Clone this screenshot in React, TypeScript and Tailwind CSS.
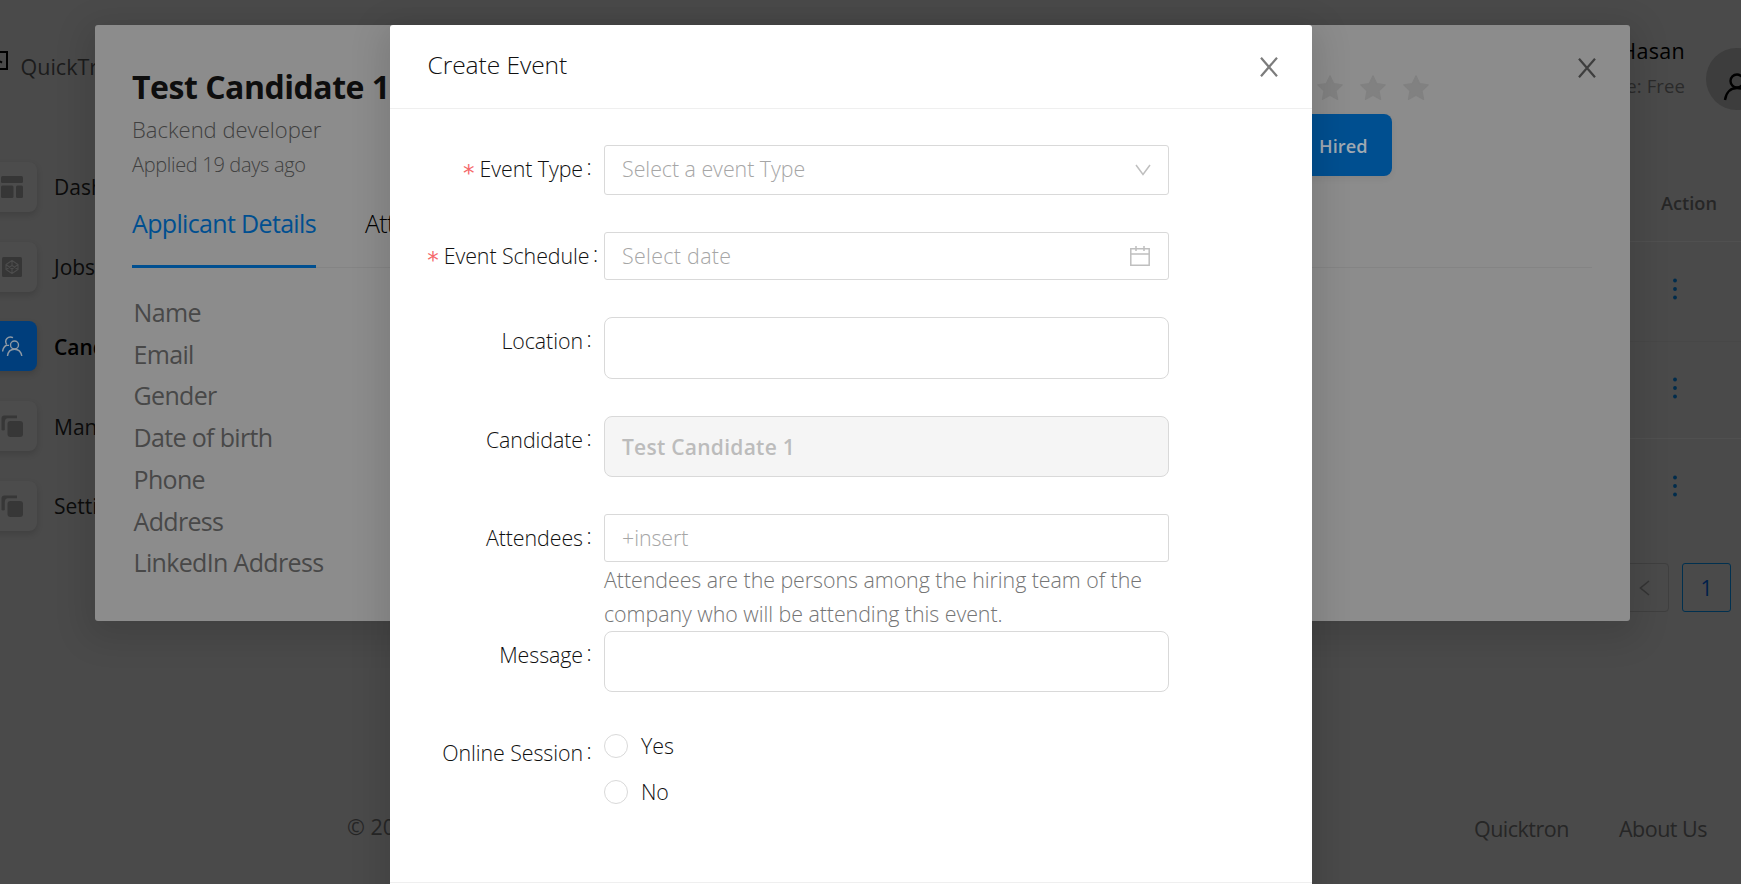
import type { ReactNode } from "react";

function CloseIcon() {
  return (
    <svg width="18" height="20" viewBox="0 0 18 20" fill="none" stroke="currentColor" strokeWidth="2.200">
      <path d="M1 0.800 17 19.200M17 0.800 1 19.200" />
    </svg>
  );
}

function ChevronDown() {
  return (
    <svg width="16" height="12" viewBox="0 0 16 12" fill="none" stroke="#bfbfbf" strokeWidth="1.500">
      <path d="M1 1 8 10.500 15 1" />
    </svg>
  );
}

function CalendarIcon() {
  return (
    <svg width="20" height="20" viewBox="0 0 20 20" fill="none" stroke="#bfbfbf" strokeWidth="1.500">
      <path d="M0.800 2.800H19.200V19.200H0.800ZM0.800 8H19.200M6 0V5M14 0V5" />
    </svg>
  );
}

function Star() {
  return (
    <svg width="28" height="28" viewBox="0 0 24 24" fill="#818181" stroke="#818181" strokeWidth="1" strokeLinejoin="round">
      <path d="M12 1.500 15.200 8.200 22.500 9.200 17.200 14.400 18.500 21.800 12 18.300 5.500 21.800 6.800 14.400 1.500 9.200 8.800 8.200Z" />
    </svg>
  );
}

function DashboardIcon() {
  return (
    <svg width="22" height="22" viewBox="0 0 22 22" fill="#363636">
      <rect width="22" height="7" rx="1.500" />
      <rect y="9.500" width="12.500" height="12.500" rx="1.500" />
      <rect x="15" y="9.500" width="7" height="12.500" rx="1.500" />
    </svg>
  );
}

function JobsIcon() {
  return (
    <svg width="20" height="20" viewBox="0 0 20 20" fill="none" stroke="#4c4c4c" strokeWidth="1.100">
      <rect width="20" height="20" rx="1.500" fill="#363636" stroke="none" />
      <path d="M10 3.500 16 7.500V12.500L10 16.500 4 12.500V7.500ZM4 7.500 10 12 16 7.500M4 12.500 10 8.500 16 12.500M10 3.500V8.500M10 12V16.500" />
    </svg>
  );
}

function CandidatesIcon() {
  return (
    <svg width="21" height="21" viewBox="0 0 21 21" fill="none" stroke="#8f9aa5" strokeWidth="1.400">
      <circle cx="12.500" cy="9" r="4" />
      <path d="M5.500 20C6 15.500 9 13.200 12.500 13.200S19 15.500 19.800 20M11 1.700C6 -0.500 2 4 4.600 8.300M4.800 9C2.500 10 1 12.500 0.600 15.500M4.600 9.400H7" />
    </svg>
  );
}

function CopyIcon() {
  return (
    <svg width="22" height="22" viewBox="0 0 22 22" fill="#373737">
      <rect x="6.500" y="6" width="15.500" height="16" rx="3" />
      <path d="M0.500 15V3.500A3 3 0 0 1 3.500 0.500H16V3.300H7A3.600 3.600 0 0 0 3.800 6.900V15A3.300 3.300 0 0 1 0.500 15Z" />
    </svg>
  );
}

function NavItem({ icon, label, active }: { icon: ReactNode; label: string; active?: boolean }) {
  return (
    <div className="flex h-[79.800px] items-center">
      <div
        className={
          active
            ? "-ml-[13px] flex h-[50px] w-[50px] shrink-0 items-center justify-center rounded-lg bg-[#003e7c] shadow-[0_3px_6px_rgba(0,0,0,0.14)]"
            : "-ml-[13px] flex h-[50px] w-[50px] shrink-0 items-center justify-center rounded-lg bg-[#4c4c4c] shadow-[0_3px_6px_rgba(0,0,0,0.14)]"
        }
      >
        {icon}
      </div>
      <span
        className={
          active
            ? "ml-[17px] pt-[2px] text-[21px] font-semibold text-black"
            : "ml-[17px] pt-[2px] text-[21px] text-[#0c0c0c]"
        }
      >
        {label}
      </span>
    </div>
  );
}

function MoreDots() {
  return (
    <svg width="4" height="22" viewBox="0 0 4 22" fill="#002c4c">
      <circle cx="2" cy="2.500" r="1.900" />
      <circle cx="2" cy="11" r="1.900" />
      <circle cx="2" cy="19.500" r="1.900" />
    </svg>
  );
}

function Page() {
  return (
    <div className="flex h-full flex-col bg-[#4a4a4a]">
      <div className="flex min-h-0 flex-1 justify-between">
        <aside className="w-[120px] shrink-0 overflow-hidden whitespace-nowrap">
          <div className="flex h-[147px] pt-[50px]">
            <svg className="mt-px shrink-0" width="8" height="19" viewBox="0 0 8 19" fill="none" stroke="#000" strokeWidth="2">
              <path d="M0 1H7V18H0M0 10.300 2 11.600" />
            </svg>
            <span className="ml-[12.500px] text-[21.500px] leading-[34px] text-[#1c1c1c]">QuickTron</span>
          </div>
          <NavItem icon={<DashboardIcon />} label="Dashboard" />
          <NavItem icon={<JobsIcon />} label="Jobs" />
          <NavItem icon={<CandidatesIcon />} label="Candidates" active />
          <NavItem icon={<CopyIcon />} label="Manage" />
          <NavItem icon={<CopyIcon />} label="Settings" />
        </aside>
        <section className="flex w-[111px] shrink-0 flex-col">
          <div className="flex h-[167px] gap-[21px] pt-[34px]">
            <div className="flex w-[55px] shrink-0 flex-col items-end whitespace-nowrap">
              <span className="text-[21.500px] leading-[34px] font-medium tracking-[0.300px] text-black">Hasan</span>
              <span className="mt-px text-[18.500px] leading-[34px] font-medium tracking-[0.100px] text-[#2a2a2a]">Profile: Free</span>
            </div>
            <div className="mt-[14px] flex size-[62px] shrink-0 items-center justify-center rounded-full bg-[#3d3d3d]">
              <svg className="mt-4" width="28" height="28" viewBox="0 0 28 28" fill="none" stroke="#000" strokeWidth="2.400">
                <circle cx="14" cy="8" r="6.500" />
                <path d="M2 27C3 19 8 15 14 15S25 19 26 27" />
              </svg>
            </div>
          </div>
          <div className="flex h-[75px] items-center border-b border-[#505050] pb-px pl-[31px] text-[18.200px] font-semibold text-[#262626]">
            Action
          </div>
          <div className="flex h-[100px] items-center border-b border-[#474747] pb-[5px] pl-[42.500px]"><MoreDots /></div>
          <div className="flex h-[97px] items-center border-b border-[#505050] pb-[4px] pl-[42.500px]"><MoreDots /></div>
          <div className="flex h-[97px] items-center pb-[3px] pl-[42.500px]"><MoreDots /></div>
          <div className="mt-[27px] flex gap-[13px]">
            <div className="-ml-[10px] flex h-[49px] w-[49px] shrink-0 items-center justify-center rounded-sm border border-[#3f3f3f]">
              <svg width="11" height="16" viewBox="0 0 11 16" fill="none" stroke="#343434" strokeWidth="1.600">
                <path d="M10 1 1.500 8 10 15" />
              </svg>
            </div>
            <div className="flex h-[49px] w-[49px] shrink-0 items-center justify-center rounded-[3px] border border-[#00304f] pt-[2px] text-[21px] text-[#001f4a]">
              1
            </div>
          </div>
        </section>
      </div>
      <footer className="flex h-[110px] shrink-0 justify-between pr-[34px] pl-[347px] text-[21.500px] leading-[34px] text-[#262626]">
        <span className="pt-[36px]">© 2022</span>
        <div className="flex gap-[50px] pt-[38px] tracking-[-0.500px]">
          <span>Quicktron</span>
          <span>About Us</span>
        </div>
      </footer>
    </div>
  );
}

const details = ["Name", "Email", "Gender", "Date of birth", "Phone", "Address", "LinkedIn Address"];

function CandidateModal() {
  return (
    <div className="absolute inset-0 flex items-start pt-[25px] pl-[95px]">
      <div className="flex h-[596px] w-[1535px] flex-col rounded-[3px] bg-[#8c8c8c] pr-[38px] pl-[37px] shadow-[0_9px_34px_8px_rgba(0,0,0,0.12)]">
        <div className="flex h-[181px] justify-between pt-[40px]">
          <div className="flex flex-col">
            <h1 className="text-[32px] leading-[44px] font-bold tracking-[-0.480px] text-[#0e0e0e]">Test Candidate 1</h1>
            <span className="mt-[3px] text-[22px] leading-[34px] font-light text-[#404040]">Backend developer</span>
            <span className="mt-[2px] text-[20px] leading-[34px] font-light tracking-[-0.330px] text-[#404040]">Applied 19 days ago</span>
          </div>
          <div className="flex">
            <div className="mt-[9px] flex w-[260px] flex-col items-end">
              <div className="mr-[3px] flex h-[40px] gap-[15px]">
                <Star />
                <Star />
                <Star />
              </div>
              <div className="mr-[41px] flex h-[62px] w-[120px] items-center justify-end rounded-lg bg-[#004f90] pt-[3px] pr-[24.500px] text-[18.200px] font-semibold text-[#a0a9b2] shadow-[0_3px_6px_rgba(0,0,0,0.05)]">
                Hired
              </div>
            </div>
            <div className="-mt-[7px] mr-[-4px] ml-[145px] text-[#3e3e3e]">
              <CloseIcon />
            </div>
          </div>
        </div>
        <div className="flex h-[62px] gap-[49px] border-b border-[#848484] text-[25px] leading-[34px] tracking-[-0.660px]">
          <span className="h-[62px] border-b-[3px] border-[#004f90] text-[#004f90]">Applicant Details</span>
          <span className="font-light text-black">Attachments</span>
        </div>
        <dl className="mt-[24px] flex flex-col pl-[1.500px] text-[25px] leading-[41.700px] font-normal tracking-[-0.660px] text-[#484848]">
          {details.map((d) => (
            <dt key={d}>{d}</dt>
          ))}
        </dl>
      </div>
    </div>
  );
}

function Row({
  label,
  required,
  overflow,
  className,
  children,
}: {
  label: string;
  required?: boolean;
  overflow?: boolean;
  className: string;
  children: ReactNode;
}) {
  return (
    <div className={"flex items-start " + className}>
      <div
        className={
          overflow
            ? "flex w-[176px] shrink-0 justify-end pt-[7px] pr-[6px] leading-[34px] whitespace-nowrap"
            : "flex w-[176px] shrink-0 justify-end pt-[7px] pr-[12.500px] leading-[34px] whitespace-nowrap"
        }
      >
        {required && (
          <span className="mt-[4px] mr-[5px] font-['DejaVu_Sans',sans-serif] text-[23px] font-normal text-[#f5696b]">*</span>
        )}
        <span>{label}</span>
        <span className="-mt-[2px] ml-[3.500px]">:</span>
      </div>
      <div className="w-[565px]">{children}</div>
    </div>
  );
}

function EventModal() {
  return (
    <div className="absolute inset-0 flex items-start pt-[25px] pl-[390px]">
      <div className="h-[920px] w-[922px] rounded-[3px] bg-white text-[21.400px] font-light tracking-[-0.080px] text-[#101010] shadow-[0_9px_34px_8px_rgba(0,0,0,0.12)]">
        <header className="flex h-[84px] items-center justify-between border-b border-[#efefef] pr-[34.500px] pl-[37.500px]">
          <h2 className="pb-[3px] text-[24.600px] leading-[34px] tracking-[-0.080px]">Create Event</h2>
          <span className="text-[#7c7c7c]">
            <CloseIcon />
          </span>
        </header>
        <form className="flex h-[774px] flex-col border-b border-[#efefef] pt-[36px] pl-[38px]">
          <Row label="Event Type" required className="h-[87px]">
            <div className="flex h-[50px] items-center justify-between rounded-[3px] border border-[#d9d9d9] pr-[17px] pl-[17px]">
              <span className="pb-px tracking-[-0.040px] text-[#a6a6a6]">Select a event Type</span>
              <ChevronDown />
            </div>
          </Row>
          <Row label="Event Schedule" required overflow className="h-[85px]">
            <div className="flex h-[48px] items-center justify-between rounded-[3px] border border-[#d9d9d9] pr-[18px] pl-[17px]">
              <span className="pt-px tracking-[0.320px] text-[#a6a6a6]">Select date</span>
              <CalendarIcon />
            </div>
          </Row>
          <Row label="Location" className="h-[99px]">
            <div className="h-[62px] rounded-lg border border-[#d9d9d9]" />
          </Row>
          <Row label="Candidate" className="h-[98px]">
            <div className="flex h-[61px] items-center rounded-lg border border-[#d9d9d9] bg-[#f5f5f5] pt-[3px] pl-[17px] text-[21px] font-semibold tracking-[0.260px] text-[#bcbcbc]">
              Test Candidate 1
            </div>
          </Row>
          <Row label="Attendees" className="h-[117px]">
            <div className="flex h-[48px] items-center rounded-[3px] border border-[#d9d9d9] pt-px pl-[17px] text-[#a6a6a6]">+insert</div>
            <p className="mt-px leading-[34px] tracking-[-0.050px] text-[#757575]">
              Attendees are the persons among the hiring team of the company who will be attending this event.
            </p>
          </Row>
          <Row label="Message" className="h-[98px]">
            <div className="h-[61px] rounded-lg border border-[#d9d9d9]" />
          </Row>
          <Row label="Online Session" className="h-[98px]">
            <div className="flex flex-col">
              {["Yes", "No"].map((o) => (
                <label key={o} className="flex h-[46px] items-center gap-[13px] pb-[12px]">
                  <span className="size-6 rounded-full border border-[#d9d9d9]" />
                  <span className="pt-px">{o}</span>
                </label>
              ))}
            </div>
          </Row>
        </form>
      </div>
    </div>
  );
}

export default function App() {
  return (
    <div className="relative h-[884px] w-full overflow-hidden font-['Open_Sans','Noto_Sans',sans-serif]">
      <Page />
      <CandidateModal />
      <EventModal />
    </div>
  );
}
